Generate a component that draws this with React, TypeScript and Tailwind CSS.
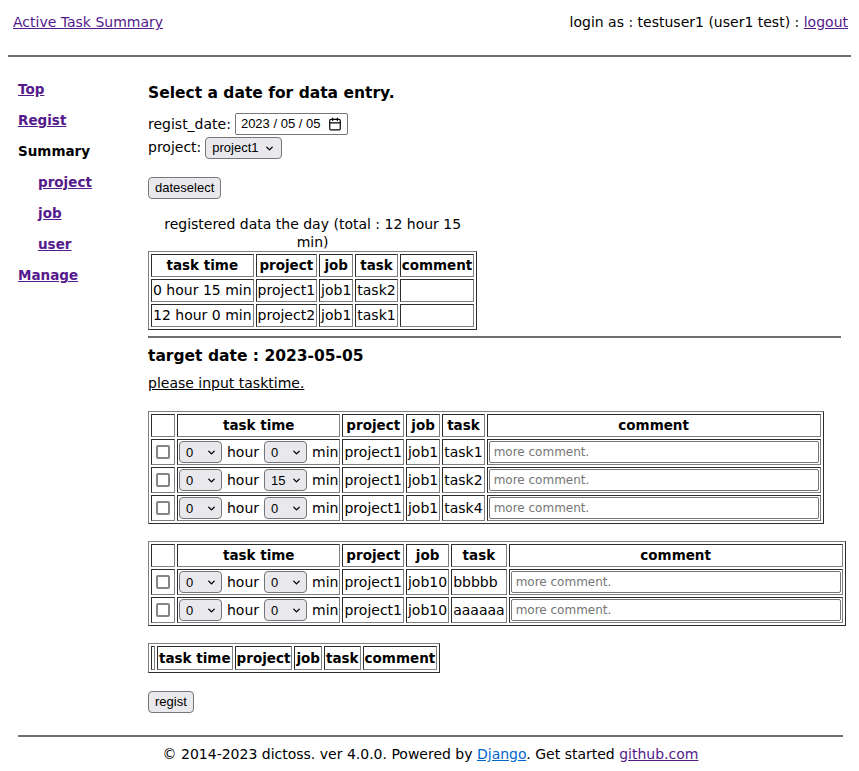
import { ChevronDown, Calendar } from 'lucide-react'

interface Registered {
  time: string
  project: string
  job: string
  task: string
}

interface EntryRow {
  hour: string
  min: string
  project: string
  job: string
  task: string
}

const registered: Registered[] = [
  { time: '0 hour 15 min', project: 'project1', job: 'job1', task: 'task2' },
  { time: '12 hour 0 min', project: 'project2', job: 'job1', task: 'task1' },
]

const job1Rows: EntryRow[] = [
  { hour: '0', min: '0', project: 'project1', job: 'job1', task: 'task1' },
  { hour: '0', min: '15', project: 'project1', job: 'job1', task: 'task2' },
  { hour: '0', min: '0', project: 'project1', job: 'job1', task: 'task4' },
]

const job10Rows: EntryRow[] = [
  { hour: '0', min: '0', project: 'project1', job: 'job10', task: 'bbbbb' },
  { hour: '0', min: '0', project: 'project1', job: 'job10', task: 'aaaaaa' },
]

const tableCls = 'leading-[19px] border-separate border-spacing-[2px] border border-[#808080] [border-style:outset]'
const cellCls = 'border border-[#808080] [border-style:inset] p-[1px]'
const headCls = 'border border-[#808080] [border-style:inset] p-[1px] font-bold text-center text-[13.5px]'
const ctrlFont = "font-['Liberation_Sans',Arial,sans-serif]"

function SmallSelect({ value }: { value: string }) {
  return (
    <span className="relative inline-flex align-middle">
      <select
        defaultValue={value}
        className={ctrlFont + ' appearance-none w-[43px] h-[22px] rounded-[4px] border border-[#767676] bg-[#e9e9ed] pl-[6px] text-[13px] leading-none text-black'}
      >
        <option value={value}>{value}</option>
      </select>
      <ChevronDown className="absolute right-[5px] top-[6px] h-[11px] w-[11px] pointer-events-none" strokeWidth={3} />
    </span>
  )
}

function EntryTable({ rows }: { rows: EntryRow[] }) {
  return (
    <table className={tableCls}>
      <thead>
        <tr>
          <th className={headCls}></th>
          <th className={headCls}>task time</th>
          <th className={headCls}>project</th>
          <th className={headCls}>job</th>
          <th className={headCls}>task</th>
          <th className={headCls}>comment</th>
        </tr>
      </thead>
      <tbody>
        {rows.map((r, i) => (
          <tr key={i}>
            <td className={cellCls}>
              <span className="flex items-center justify-center px-[3px]">
                <input
                  type="checkbox"
                  className="appearance-none w-[14px] h-[14px] border-2 border-[#858585] rounded-[2px] bg-white"
                />
              </span>
            </td>
            <td className={cellCls + ' whitespace-nowrap'}>
              <span className="flex items-center gap-[5px]">
                <SmallSelect value={r.hour} />
                hour
                <SmallSelect value={r.min} />
                min
              </span>
            </td>
            <td className={cellCls}>{r.project}</td>
            <td className={cellCls}>{r.job}</td>
            <td className={cellCls}>{r.task}</td>
            <td className={cellCls}>
              <input
                type="text"
                placeholder="more comment."
                className="w-[330px] h-[22px] border border-[#767676] rounded-[2px] px-[4px] text-[12px] placeholder:text-[#757575] bg-white"
              />
            </td>
          </tr>
        ))}
      </tbody>
    </table>
  )
}

export default function App() {
  return (
    <div className="min-h-[771px] bg-white text-black text-[14px] font-['DejaVu_Sans',sans-serif]">
      <header className="flex justify-between px-[13px] pt-[12px] h-[55px] items-start">
        <a href="#" className="text-[#551a8b] underline leading-[20px]">Active Task Summary</a>
        <span className="leading-[20px] -mr-[2px]">
          login as : testuser1 (user1 test) : <a href="#" className="text-[#551a8b] underline">logout</a>
        </span>
      </header>
      <div className="mx-2 h-[2px] bg-[#6e6e6e]" />

      <div className="flex pl-[18px] pt-[17px]">
        <nav className="w-[130px] shrink-0 flex flex-col font-bold text-[13.5px]">
          <a href="#" className="h-[31px] leading-[31px] text-[#551a8b] underline">Top</a>
          <a href="#" className="h-[31px] leading-[31px] text-[#551a8b] underline">Regist</a>
          <span className="h-[31px] leading-[31px]">Summary</span>
          <a href="#" className="h-[31px] leading-[31px] pl-[20px] text-[#551a8b] underline">project</a>
          <a href="#" className="h-[31px] leading-[31px] pl-[20px] text-[#551a8b] underline">job</a>
          <a href="#" className="h-[31px] leading-[31px] pl-[20px] text-[#551a8b] underline">user</a>
          <a href="#" className="h-[31px] leading-[31px] text-[#551a8b] underline">Manage</a>
        </nav>

        <main className="w-[693px]">
          <h2 className="mt-[8px] text-[15.5px] font-bold leading-[22px]">Select a date for data entry.</h2>
          <div className="mt-[8px] flex items-center gap-[4px] h-[24px]">
            regist_date:
            <span className={ctrlFont + ' inline-flex items-center h-[22px] rounded-[2px] border border-[#767676] px-[5px] gap-[8px] text-[13px]'}>
              2023 / 05 / 05
              <Calendar className="h-[14px] w-[14px]" strokeWidth={2} />
            </span>
          </div>
          <div className="flex items-center gap-[4px] h-[23px]">
            project:
            <span className="relative inline-flex">
              <select
                defaultValue="project1"
                className={ctrlFont + ' appearance-none h-[22px] w-[77px] rounded-[4px] border border-[#767676] bg-[#e9e9ed] pl-[6px] text-[13px] text-black'}
              >
                <option value="project1">project1</option>
              </select>
              <ChevronDown className="absolute right-[7px] top-[6px] h-[11px] w-[11px] pointer-events-none" strokeWidth={3} />
            </span>
          </div>
          <button className={ctrlFont + ' mt-[18px] h-[22px] px-[6px] rounded-[4px] border border-[#767676] bg-[#e9e9ed] text-[13px]'}>
            dateselect
          </button>

          <table className={tableCls + ' mt-[16px]'}>
            <caption className="leading-[18px] px-[14px]">registered data the day (total : 12 hour 15 min)</caption>
            <thead>
              <tr>
                <th className={headCls}>task time</th>
                <th className={headCls}>project</th>
                <th className={headCls}>job</th>
                <th className={headCls}>task</th>
                <th className={headCls}>comment</th>
              </tr>
            </thead>
            <tbody>
              {registered.map((r) => (
                <tr key={r.time}>
                  <td className={cellCls}>{r.time}</td>
                  <td className={cellCls}>{r.project}</td>
                  <td className={cellCls}>{r.job}</td>
                  <td className={cellCls}>{r.task}</td>
                  <td className={cellCls}></td>
                </tr>
              ))}
            </tbody>
          </table>

          <div className="mt-[6px] h-[2px] bg-[#6e6e6e]" />
          <h2 className="mt-[7px] text-[15.5px] font-bold leading-[22px]">target date : 2023-05-05</h2>
          <p className="mt-[7px] underline leading-[18px]">please input tasktime.</p>

          <div className="mt-[19px]">
            <EntryTable rows={job1Rows} />
          </div>
          <div className="mt-[17px]">
            <EntryTable rows={job10Rows} />
          </div>

          <table className={tableCls + ' mt-[17px]'}>
            <thead>
              <tr>
                <th className={headCls + ' h-[24px]'}></th>
                <th className={headCls}>task time</th>
                <th className={headCls}>project</th>
                <th className={headCls}>job</th>
                <th className={headCls}>task</th>
                <th className={headCls}>comment</th>
              </tr>
            </thead>
          </table>

          <button className={ctrlFont + ' mt-[18px] h-[22px] px-[6px] rounded-[4px] border border-[#767676] bg-[#e9e9ed] text-[13px]'}>
            regist
          </button>
        </main>
      </div>

      <div className="mt-[22px] mx-[18px] w-[825px] h-[2px] bg-[#6e6e6e]" />
      <footer className="pt-[7px] text-center leading-[20px] pl-[2px]">
        © 2014-2023 dictoss. ver 4.0.0. Powered by <a href="#" className="text-[#0066cc] underline">Django</a>. Get started{' '}
        <a href="#" className="text-[#551a8b] underline">github.com</a>
      </footer>
    </div>
  )
}
